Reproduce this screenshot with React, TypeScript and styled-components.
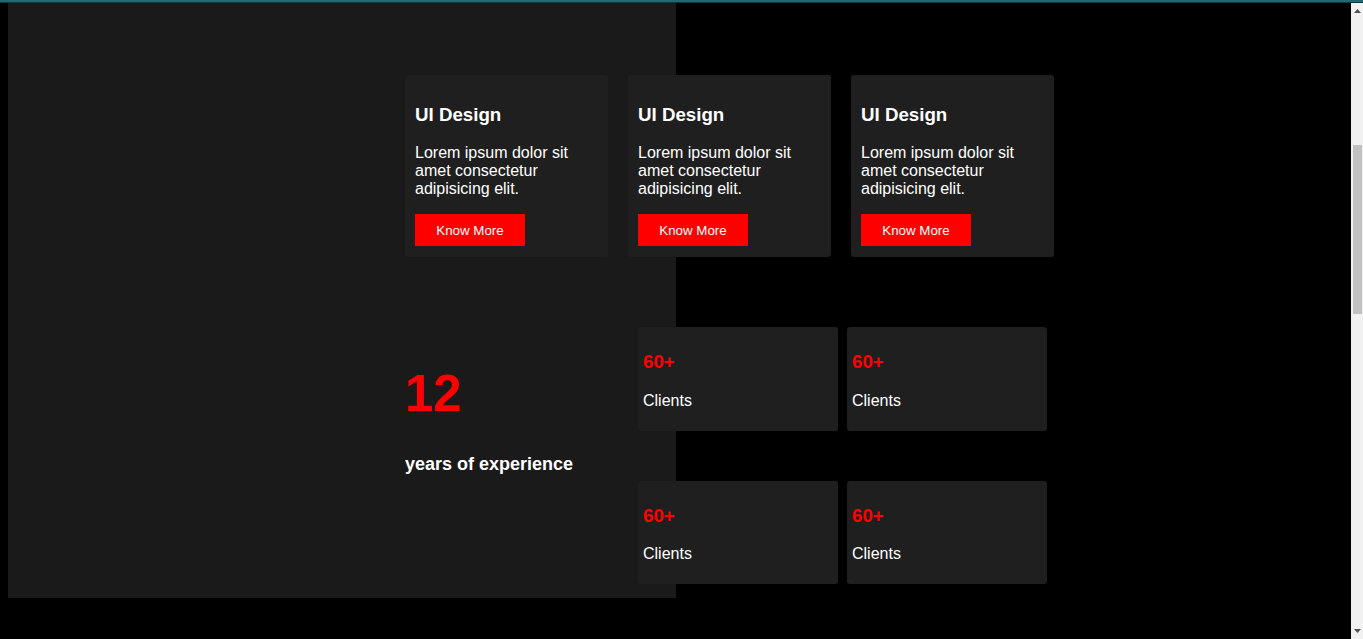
import React from "react";
import styled, { createGlobalStyle } from "styled-components";

const GlobalStyle = createGlobalStyle`
  html, body {
    margin: 0;
    padding: 0;
    background: #000;
    overflow: hidden;
  }
  body {
    font-family: "Liberation Sans", Arial, sans-serif;
    color: #fff;
  }
`;

const Frame = styled.div`
  display: flex;
  flex-direction: column;
  height: 639px;
  background: #000;
`;

const TopLine = styled.div`
  flex-shrink: 0;
  height: 2px;
  background: #1b6b74;
  border-bottom: 1px solid #0c3a40;
`;

const Viewport = styled.div`
  flex: 1;
  display: flex;
  min-height: 0;
`;

const Main = styled.main`
  flex: 1;
  overflow: hidden;
  padding-left: 8px;
`;

const Section = styled.section`
  background: linear-gradient(to right, #1a1a1a 0 668px, transparent 668px);
  padding: 72px 0 14px 397px;
`;

const ServicesRow = styled.div`
  display: flex;
  gap: 20px;
`;

const ServiceCard = styled.article`
  box-sizing: border-box;
  width: 203px;
  padding: 10px 10px 11px;
  background: #1f1f1f;
  border-radius: 3px;
`;

const CardTitle = styled.h3`
  font-size: 18.72px;
  font-weight: 700;
  margin: 18.72px 0;
  color: #fff;
`;

const CardText = styled.p`
  font-size: 16px;
  margin: 16px 0;
  color: #fff;
`;

const KnowMore = styled.button`
  display: block;
  width: 110px;
  height: 32px;
  border: none;
  background: #ff0000;
  color: #fff;
  font-family: "Liberation Sans", Arial, sans-serif;
  font-size: 13.33px;
  padding: 0;
`;

const StatsRow = styled.div`
  display: flex;
  margin-top: 70px;
`;

const Experience = styled.div`
  width: 233px;
  padding-top: 37px;
`;

const BigNumber = styled.div`
  font-size: 51px;
  font-weight: 700;
  color: #ff0000;
  line-height: normal;
`;

const ExperienceLabel = styled.div`
  margin-top: 31px;
  font-size: 18px;
  font-weight: 700;
  color: #fff;
`;

const StatsGrid = styled.div`
  display: grid;
  grid-template-columns: 200px 200px;
  column-gap: 9px;
  row-gap: 50px;
  align-content: start;
`;

const StatCard = styled.div`
  padding: 5px;
  background: #1f1f1f;
  border-radius: 3px;
`;

const StatValue = styled.h3`
  font-size: 18.72px;
  font-weight: 700;
  margin: 18.72px 0;
  color: #ff0000;
`;

const StatLabel = styled.p`
  font-size: 16px;
  margin: 16px 0;
  color: #fff;
`;

const ScrollTrack = styled.div`
  width: 12px;
  flex-shrink: 0;
  background: #f1f1f1;
  display: flex;
  flex-direction: column;
`;

const ArrowButton = styled.div`
  height: 16px;
  display: flex;
  align-items: center;
  justify-content: center;
  flex-shrink: 0;
`;

const ThumbArea = styled.div`
  flex: 1;
  padding-top: 126px;
`;

const Thumb = styled.div`
  width: 9px;
  height: 169px;
  margin-left: 2px;
  background: #c1c1c1;
`;

const services = [1, 2, 3];
const stats = [1, 2, 3, 4];

export default function App() {
  return (
    <>
      <GlobalStyle />
      <Frame>
        <TopLine />
        <Viewport>
          <Main>
            <Section>
              <ServicesRow>
                {services.map((s) => (
                  <ServiceCard key={s}>
                    <CardTitle>UI Design</CardTitle>
                    <CardText>Lorem ipsum dolor sit amet consectetur adipisicing elit.</CardText>
                    <KnowMore>Know More</KnowMore>
                  </ServiceCard>
                ))}
              </ServicesRow>
              <StatsRow>
                <Experience>
                  <BigNumber>12</BigNumber>
                  <ExperienceLabel>years of experience</ExperienceLabel>
                </Experience>
                <StatsGrid>
                  {stats.map((s) => (
                    <StatCard key={s}>
                      <StatValue>60+</StatValue>
                      <StatLabel>Clients</StatLabel>
                    </StatCard>
                  ))}
                </StatsGrid>
              </StatsRow>
            </Section>
          </Main>
          <ScrollTrack>
            <ArrowButton>
              <svg width="7" height="4" viewBox="0 0 7 4">
                <polygon points="3.5,0 7,4 0,4" fill="#505050" />
              </svg>
            </ArrowButton>
            <ThumbArea>
              <Thumb />
            </ThumbArea>
            <ArrowButton>
              <svg width="7" height="4" viewBox="0 0 7 4">
                <polygon points="0,0 7,0 3.5,4" fill="#505050" />
              </svg>
            </ArrowButton>
          </ScrollTrack>
        </Viewport>
      </Frame>
    </>
  );
}
